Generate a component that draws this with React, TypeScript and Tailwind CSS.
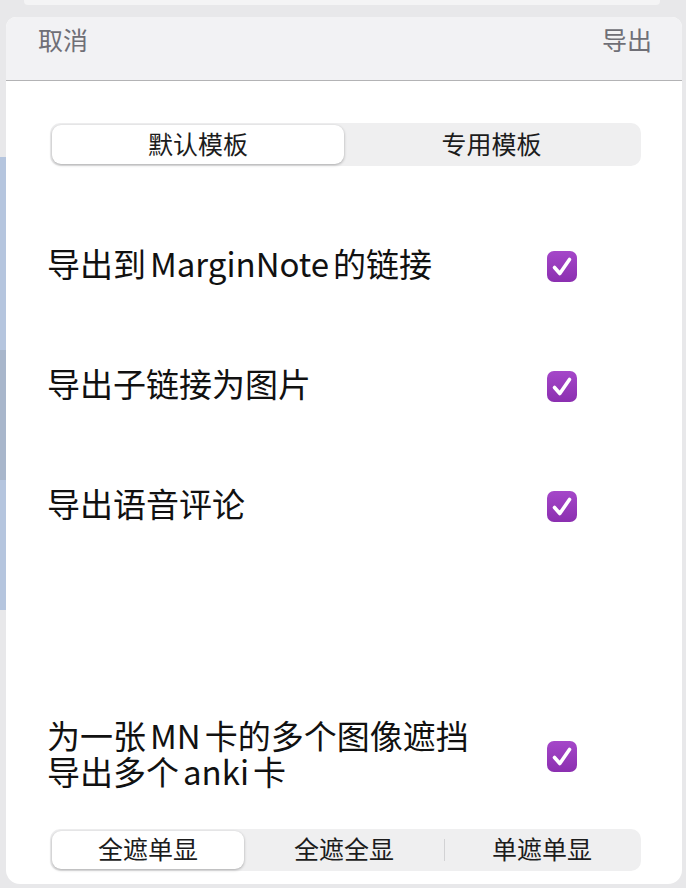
import React from "react";

const font = { fontFamily: '"Noto Sans CJK SC", "Noto Sans", sans-serif' };

function Check() {
  return (
    <svg width="30" height="31" viewBox="0 0 30 31">
      <defs>
        <linearGradient id="cg" x1="0" y1="0" x2="0" y2="1">
          <stop offset="0" stopColor="#a547c9" />
          <stop offset="1" stopColor="#8b2fb0" />
        </linearGradient>
      </defs>
      <rect x="0" y="0" width="30" height="31" rx="7" fill="url(#cg)" />
      <path d="M7.5 16.5 L12.8 22.5 L22.5 8.5" fill="none" stroke="#fff" strokeWidth="3.6" strokeLinecap="round" strokeLinejoin="round" />
    </svg>
  );
}

function Row({ children }: { children: React.ReactNode }) {
  return (
    <div className="flex items-center h-[120px] pl-[41px]">
      <div className="w-[500px] pb-[6px] text-[33px] leading-[36px] text-[#111]">{children}</div>
      <Check />
    </div>
  );
}

function Lat({ children }: { children: React.ReactNode }) {
  return <span className="mx-[4px]">{children}</span>;
}

export default function App() {
  return (
    <div className="relative w-[686px] h-[888px] bg-[#e8e8ea] overflow-hidden" style={font}>
      <div className="absolute left-0 top-[157px] w-[8px] h-[453px] bg-[#b5c5de]" />
      <div className="absolute left-0 top-[350px] w-[8px] h-[130px] bg-[#a8b6cb]" />
      <div className="absolute left-[24px] top-0 w-[636px] h-[5px] bg-[#f4f4f5] rounded-b-[4px]" />
      <div className="relative ml-[6px] pt-[17px]">
        <div className="w-[676px] h-[867px] bg-white rounded-t-[10px] rounded-b-[14px] overflow-hidden flex flex-col">
          <div className="h-[64px] shrink-0 bg-[#f2f2f4] border-b border-[#b3b3b5] flex items-start justify-between pt-[4px] pl-[32px] pr-[30px] text-[25px] leading-[36px] text-[#6f6f76]">
            <span>取消</span>
            <span>导出</span>
          </div>
          <div className="mt-[42px] ml-[44px] w-[591px] h-[43px] bg-[#efeff0] rounded-[10px] p-[2px] flex text-[25px] text-[#1c1c1c]">
            <div className="w-[292px] h-full bg-white rounded-[9px] shadow-[0_1px_3px_rgba(0,0,0,0.3)] flex items-center justify-center pb-[2px]">默认模板</div>
            <div className="flex-1 flex items-center justify-center pb-[2px]">专用模板</div>
          </div>
          <div className="mt-[40px]">
            <Row>
              导出到<Lat>MarginNote</Lat>的链接
            </Row>
            <Row>导出子链接为图片</Row>
            <Row>导出语音评论</Row>
          </div>
          <div className="mt-[154px] flex items-center pl-[41px] h-[72px]">
            <div className="w-[500px] pb-[6px] text-[33px] text-[#111]">
              <div className="h-[36px] leading-[36px]">
                为一张<Lat>MN</Lat>卡的多个图像遮挡
              </div>
              <div className="h-[36px] leading-[36px]">
                导出多个<Lat>anki</Lat>卡
              </div>
            </div>
            <Check />
          </div>
          <div className="mt-[37px] ml-[44px] w-[591px] h-[42px] bg-[#efeff0] rounded-[10px] p-[2px] flex items-center text-[25px] text-[#1c1c1c]">
            <div className="w-[192px] h-full bg-white rounded-[9px] shadow-[0_1px_3px_rgba(0,0,0,0.3)] flex items-center justify-center pb-[2px]">全遮单显</div>
            <div className="w-[200px] flex items-center justify-center pb-[2px]">全遮全显</div>
            <div className="w-px h-[22px] bg-[#d2d2d4]" />
            <div className="flex-1 flex items-center justify-center pb-[2px]">单遮单显</div>
          </div>
        </div>
      </div>
    </div>
  );
}
